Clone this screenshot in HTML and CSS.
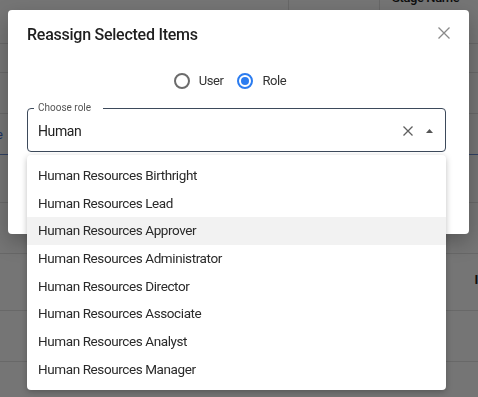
FILE: index.html
```html
<!DOCTYPE html>
<html lang="en">
<head>
  <meta charset="UTF-8">
  <title>Reassign Selected Items</title>
  <link rel="stylesheet" href="styles.css">
</head>
<body>
  <!-- Page behind the dialog -->
  <div class="page">
    <div class="row row-head">
      <span class="cell"></span>
      <span class="cell cell-mid"></span>
      <span class="cell cell-last">Stage Name</span>
    </div>
    <div class="row" style="height: 28px"></div>
    <div class="row" style="height: 40px"></div>
    <div class="row row-link" style="height: 40px"><span class="link">e</span></div>
    <div class="row" style="height: 47px"></div>
    <div class="row" style="height: 50px"></div>
    <div class="row" style="height: 56px"><span class="mark">I</span></div>
    <div class="row" style="height: 50px"></div>
    <div class="row row-foot">
      <span class="foot-a">Wh</span>
      <span class="foot-b">f</span>
    </div>
  </div>
  <div class="scrim"></div>

  <!-- Dialog -->
  <div class="dialog">
    <div class="dialog-header">
      <h1>Reassign Selected Items</h1>
      <button type="button" class="close" aria-label="Close">
        <svg width="12" height="12" viewBox="0 0 12 12"><path d="M0.5 0.5L11.5 11.5M11.5 0.5L0.5 11.5" stroke="#8a8a8a" stroke-width="1.3" fill="none"/></svg>
      </button>
    </div>

    <div class="radios">
      <label class="radio"><span class="dot"></span>User</label>
      <label class="radio checked"><span class="dot"></span>Role</label>
    </div>

    <fieldset class="field">
      <legend>Choose role</legend>
      <span class="value">Human</span>
      <svg class="clear" width="10" height="10" viewBox="0 0 10 10"><path d="M0.5 0.5L9.5 9.5M9.5 0.5L0.5 9.5" stroke="#5f5f5f" stroke-width="1.3" fill="none"/></svg>
      <svg class="caret" width="7" height="4" viewBox="0 0 7 4"><path d="M0 4L3.5 0L7 4Z" fill="#555"/></svg>
    </fieldset>
  </div>

  <!-- Autocomplete options -->
  <ul class="options">
    <li>Human Resources Birthright</li>
    <li>Human Resources Lead</li>
    <li class="active">Human Resources Approver</li>
    <li>Human Resources Administrator</li>
    <li>Human Resources Director</li>
    <li>Human Resources Associate</li>
    <li>Human Resources Analyst</li>
    <li>Human Resources Manager</li>
  </ul>
</body>
</html>
```

FILE: styles.css
```css
/* Base */
body {
  margin: 0;
  font-family: Roboto, 'Liberation Sans', sans-serif;
  letter-spacing: -0.4px;
  color: #222;
  background: #fff;
  overflow: hidden;
}

/* Table behind the modal */
.page {
  height: 397px;
}

.row {
  border-bottom: 1px solid #e2e2e2;
  position: relative;
}

.row-head {
  height: 43px;
  display: flex;
}

.cell {
  flex: 0 0 288px;
  border-right: 1px solid #e2e2e2;
}

.cell-mid {
  flex: 0 0 90px;
}

.cell-last {
  flex: 1;
  border-right: none;
  font-size: 13px;
  font-weight: 500;
  padding-left: 12px;
  margin-top: -10px;
}

.row-link {
  border-bottom: 1px solid #6b8fd6;
}

.link {
  color: #3f6fd8;
  font-size: 13px;
  position: absolute;
  left: -4px;
  top: 13px;
}

.mark {
  position: absolute;
  right: 0;
  top: 18px;
  font-weight: 700;
  font-size: 13px;
}

.row-foot {
  border-bottom: none;
  font-size: 13px;
  padding-top: 14px;
}

.foot-a {
  margin-left: 84px;
}

.foot-b {
  margin-left: 190px;
}

.scrim {
  position: fixed;
  inset: 0;
  background: rgba(0, 0, 0, 0.54);
}

/* Dialog */
.dialog {
  position: absolute;
  top: 10px;
  left: 8px;
  width: 461px;
  height: 224px;
  box-sizing: border-box;
  padding: 0 23px 0 19px;
  background: #fff;
  border-radius: 4px;
  box-shadow: 0 8px 20px rgba(0, 0, 0, 0.25);
}

.dialog-header {
  display: flex;
  justify-content: space-between;
  align-items: flex-start;
  padding-top: 13px;
}

.dialog-header h1 {
  margin: 0;
  font-size: 16px;
  font-weight: 500;
  line-height: 24px;
  letter-spacing: -0.25px;
  color: #1f1f1f;
}

.close {
  border: none;
  background: none;
  padding: 0;
  margin: 4px -4px 0 0;
  cursor: pointer;
}

.radios {
  display: flex;
  justify-content: center;
  gap: 14px;
  margin-top: 24px;
  padding-right: 13px;
  font-size: 13px;
  line-height: 20px;
  color: #333;
}

.radio {
  display: flex;
  align-items: center;
  gap: 9px;
}

.dot {
  width: 12px;
  height: 12px;
  border: 2px solid #6b6b6b;
  border-radius: 50%;
  position: relative;
}

.checked .dot {
  border-color: #2b7cf0;
}

.checked .dot::after {
  content: "";
  position: absolute;
  inset: 2px;
  border-radius: 50%;
  background: #2b7cf0;
}

/* Outlined field */
.field {
  margin: 11px 0 0 0;
  padding: 0 12px 0 10px;
  height: 50px;
  box-sizing: border-box;
  border: 1.5px solid #3d4a5b;
  border-radius: 4px;
  display: flex;
  align-items: center;
}

.field legend {
  font-size: 10px;
  letter-spacing: 0;
  color: #555;
  padding: 0 12px 0 4px;
  margin-left: -4px;
  line-height: 12px;
}

.value {
  flex: 1;
  font-size: 14px;
  margin-top: -3px;
}

.clear {
  margin-top: -3px;
  margin-right: 13px;
}

.caret {
  margin-top: -3px;
}

/* Options popup */
.options {
  position: absolute;
  top: 155px;
  left: 27px;
  width: 419px;
  margin: 0;
  padding: 7px 0 6px;
  list-style: none;
  background: #fff;
  border-radius: 4px;
  box-shadow: 0 2px 6px rgba(0, 0, 0, 0.25);
}

.options li {
  height: 27.7px;
  line-height: 27.7px;
  padding-left: 11px;
  font-size: 13.5px;
  color: #2a2a2a;
}

.options li.active {
  background: #f2f2f2;
}
```
